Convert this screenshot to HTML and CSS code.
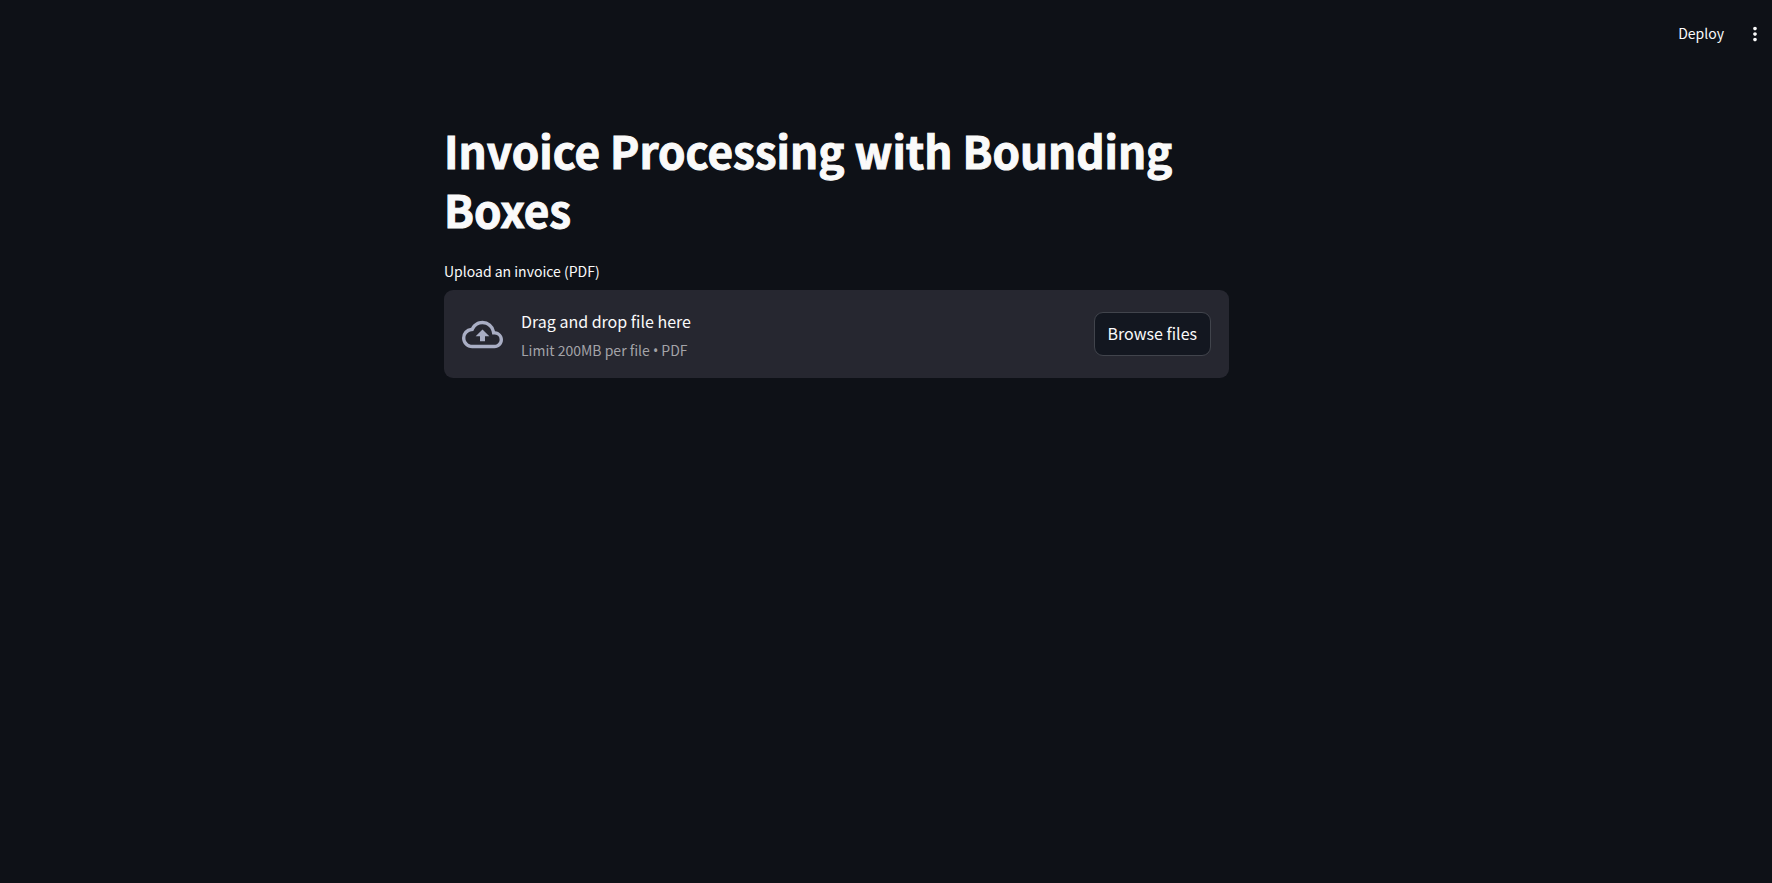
FILE: index.html
```html
<!DOCTYPE html>
<html lang="en">
<head>
<meta charset="utf-8">
<meta name="viewport" content="width=device-width, initial-scale=1">
<title>Invoice Processing</title>
<link rel="stylesheet" href="styles.css">
</head>
<body>
<header class="toolbar">
  <button class="toolbar-button" type="button">Deploy</button>
  <button class="menu-button" type="button" aria-label="Main menu">
    <svg class="menu-icon" viewBox="0 0 24 24" aria-hidden="true"><path d="M12 8c1.1 0 2-.9 2-2s-.9-2-2-2-2 .9-2 2 .9 2 2 2zm0 2c-1.1 0-2 .9-2 2s.9 2 2 2 2-.9 2-2-.9-2-2-2zm0 6c-1.1 0-2 .9-2 2s.9 2 2 2 2-.9 2-2-.9-2-2-2z"/></svg>
  </button>
</header>
<main class="main">
  <div class="block">
    <h1 class="title">Invoice Processing with Bounding Boxes</h1>
    <label class="label" for="browse">Upload an invoice (PDF)</label>
    <section class="dropzone">
      <svg class="cloud" viewBox="0 0 24 24" aria-hidden="true"><path d="M19.35 10.04A7.49 7.49 0 0012 4C9.11 4 6.6 5.64 5.35 8.04A5.994 5.994 0 000 14c0 3.31 2.69 6 6 6h13c2.76 0 5-2.24 5-5 0-2.64-2.05-4.78-4.65-4.96zM19 18H6c-2.21 0-4-1.79-4-4 0-2.05 1.53-3.76 3.56-3.97l1.07-.11.5-.95A5.469 5.469 0 0112 6c2.62 0 4.88 1.86 5.39 4.43l.3 1.5 1.53.11A2.98 2.98 0 0122 15c0 1.65-1.35 3-3 3zM8 13h2.55v3h2.9v-3H16l-4-4z"/></svg>
      <div class="instructions">
        <span class="prompt">Drag and drop file here</span>
        <span class="limit">Limit 200MB per file <span class="bullet">•</span> PDF</span>
      </div>
      <button class="browse" id="browse" type="button">Browse files</button>
    </section>
  </div>
</main>
</body>
</html>
```
FILE: styles.css
```css
* {
  box-sizing: border-box;
}

body {
  margin: 0;
  min-height: 100vh;
  background: #0e1117;
  color: #fafafa;
  font-family: "Source Sans Pro", "Noto Sans CJK SC", sans-serif;
  font-size: 16px;
  line-height: 28px;
}

button {
  margin: 0;
  color: inherit;
  font: inherit;
  cursor: pointer;
}

.toolbar {
  display: flex;
  align-items: center;
  justify-content: flex-end;
  gap: 20px;
  height: 68px;
  padding-right: 6px;
}

.toolbar-button,
.menu-button {
  padding: 0;
  border: 0;
  background: none;
}

.toolbar-button {
  padding-bottom: 2px;
  font-size: 14px;
}

.menu-button {
  display: flex;
}

.menu-icon {
  width: 22px;
  height: 22px;
  fill: currentColor;
}

.main {
  display: flex;
  justify-content: center;
  padding: 53px 99px 0 0;
}

.block {
  display: flex;
  flex-direction: column;
  width: 100%;
  max-width: 785px;
}

.title {
  margin: 0 0 20px;
  font-size: 44px;
  font-weight: 700;
  line-height: 59px;
  -webkit-text-stroke: 1px currentColor;
}

.label {
  align-self: flex-start;
  margin-bottom: 7px;
  font-size: 14px;
  line-height: 24px;
}

.dropzone {
  display: flex;
  align-items: center;
  gap: 18px;
  padding: 14px 18px;
  border-radius: 9px;
  background: #262730;
}

.cloud {
  flex: none;
  width: 41px;
  height: 41px;
  fill: #a9aec4;
}

.instructions {
  display: flex;
  flex: 1;
  flex-direction: column;
  gap: 1px;
  padding-top: 3px;
}

.limit {
  color: #a3a3a8;
  font-size: 14px;
}

.bullet {
  font-family: "Noto Sans", sans-serif;
  line-height: 1;
}

.browse {
  height: 44px;
  padding: 0 13px 2px;
  border: 1px solid #41444c;
  border-radius: 9px;
  background: #131720;
}
```
